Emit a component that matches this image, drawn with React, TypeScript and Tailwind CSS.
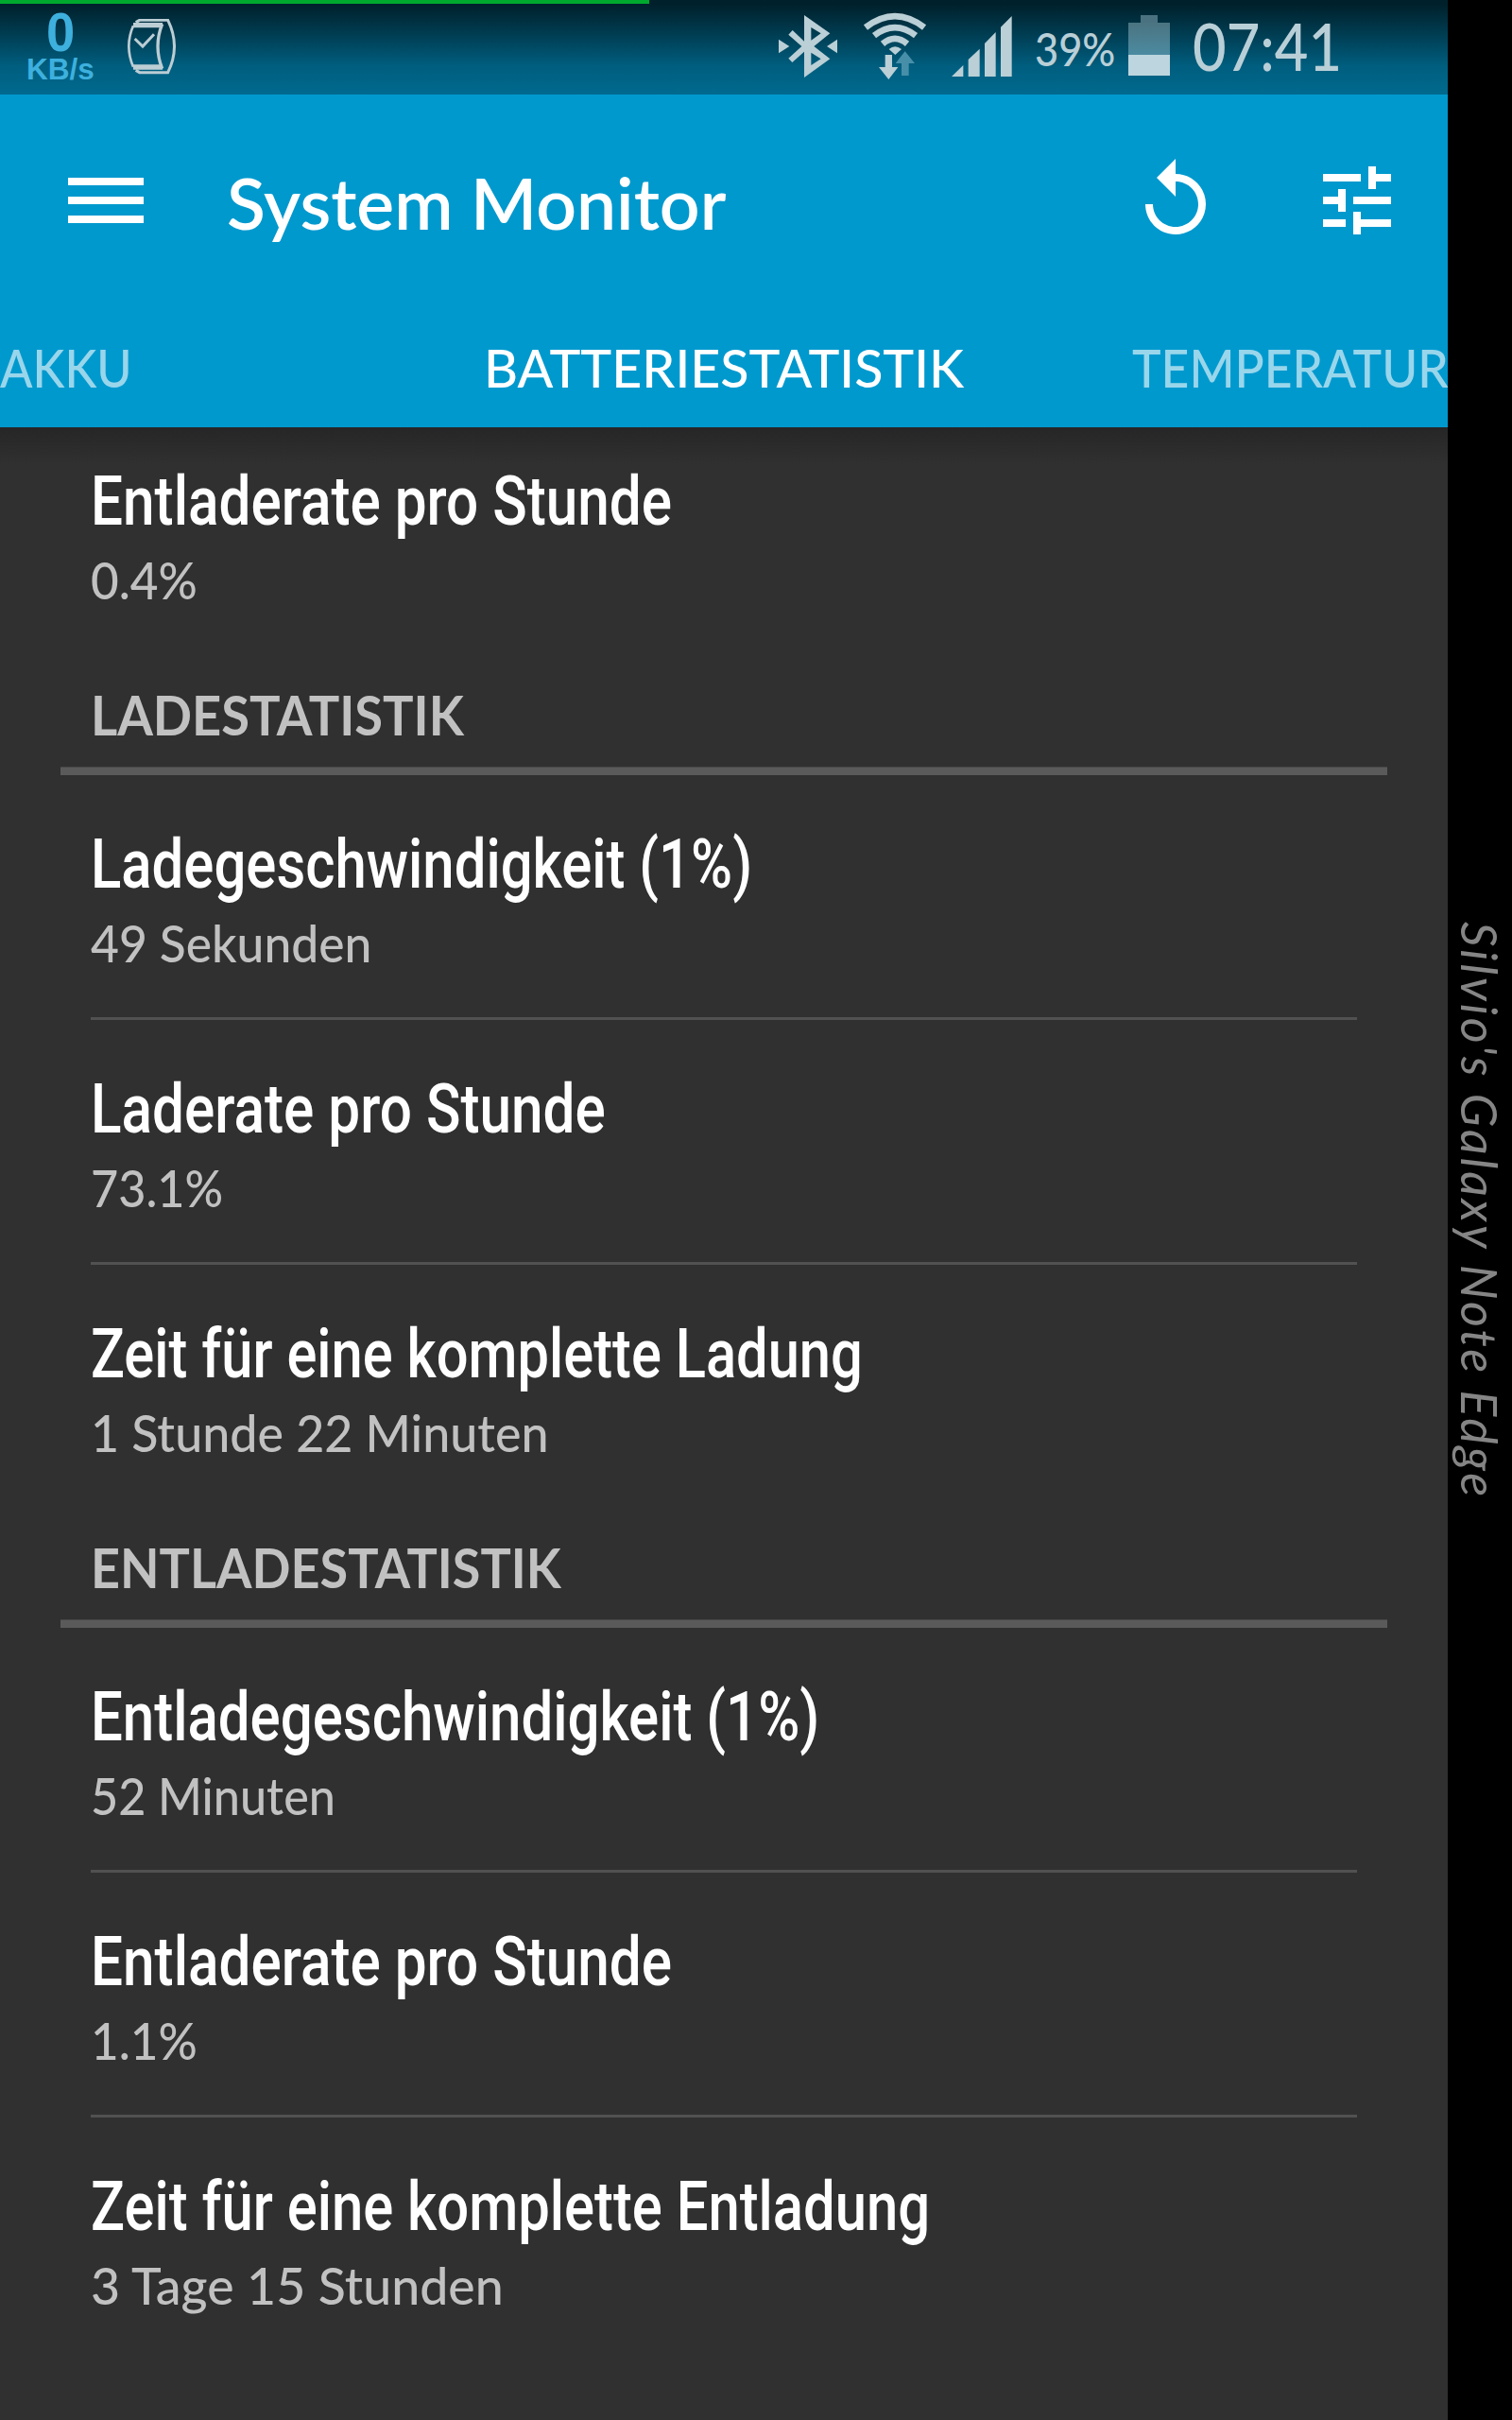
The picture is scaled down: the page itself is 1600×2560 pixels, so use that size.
import { useLayoutEffect, useRef, useState } from "react";

/* Condenses or stretches a single line of text to a fixed width. */
function Fit({ text, width, className = "" }: { text: string; width: number; className?: string }) {
  const ref = useRef<HTMLSpanElement>(null);
  const [scale, setScale] = useState(1);
  useLayoutEffect(() => {
    if (ref.current) setScale(width / ref.current.offsetWidth);
  }, [text, width]);
  return (
    <div className={`shrink-0 whitespace-nowrap ${className}`} style={{ width }}>
      <span ref={ref} className="inline-block origin-left" style={{ transform: `scaleX(${scale})` }}>
        {text}
      </span>
    </div>
  );
}

type Stat = { title: string; tw: number; value: string; vw: number };

const charging: Stat[] = [
  { title: "Ladegeschwindigkeit (1%)", tw: 700, value: "49 Sekunden", vw: 297 },
  { title: "Laderate pro Stunde", tw: 545, value: "73.1%", vw: 140 },
  { title: "Zeit für eine komplette Ladung", tw: 817, value: "1 Stunde 22 Minuten", vw: 485 },
];

const discharging: Stat[] = [
  { title: "Entladegeschwindigkeit (1%)", tw: 771, value: "52 Minuten", vw: 259 },
  { title: "Entladerate pro Stunde", tw: 615, value: "1.1%", vw: 113 },
  { title: "Zeit für eine komplette Entladung", tw: 888, value: "3 Tage 15 Stunden", vw: 437 },
];

function Item({ title, tw, value, vw }: Stat) {
  return (
    <div className="px-24">
      <Fit text={title} width={tw} className="h-20 font-['Roboto'] text-[72px] leading-20 font-medium text-white" />
      <Fit text={value} width={vw} className="mt-[11px] h-16 text-[54px] leading-16 font-medium text-[#c1c1c1]" />
    </div>
  );
}

function Section({ label, width, stats }: { label: string; width: number; stats: Stat[] }) {
  return (
    <section className="pt-[78px]">
      <Fit text={label} width={width} className="mx-24 h-16 text-[57px] leading-16 font-bold text-[#c1c1c1]" />
      <div className="mx-16 mt-[23px] mb-px h-[9px] border-t border-[#484848] bg-[#5a5a5a]" />
      {stats.map((s, i) => (
        <div key={s.title}>
          {i > 0 && <div className="mx-24 mt-[46px] mb-px h-[3px] bg-[#515151]" />}
          <div className="pt-[54px]">
            <Item {...s} />
          </div>
        </div>
      ))}
    </section>
  );
}

function StatusBar() {
  return (
    <div className="relative flex h-[100px] items-start overflow-hidden bg-linear-to-b from-[#00212c] from-5% via-[#005e7f] via-70% to-[#006a8f] text-[#b9cfd7]">
      <div className="absolute top-0 left-0 h-1 w-[687px] bg-[#00a82d]" />
      <div className="ml-7 flex w-[72px] flex-col items-center font-['Liberation_Sans'] font-bold text-[#3eb0de]">
        <Fit text="0" width={30} className="mt-1.5 h-[52px] text-[58px] leading-[56px]" />
        <Fit text="KB/s" width={72} className="h-8 text-[32px] leading-[30px]" />
      </div>
      <svg className="mt-5 ml-[35px] h-[59px] w-[51px]" viewBox="405 60 153 177" fill="none" stroke="#bccdd4">
        <path d="M423 82 Q395 147 423 212" strokeWidth="8" />
        <path d="M423 80H516M423 213H516" strokeWidth="16" />
        <path d="M515 76Q487 147 515 218" strokeWidth="10" />
        <path d="M431 71L443 64H533Q574 147 533 230H443L431 223" strokeWidth="9" />
        <path d="M428 123L453 147L489 109" strokeWidth="9" />
      </svg>
      <svg className="mt-4 ml-[638px] h-[66px] w-[62px]" viewBox="72 48 186 198" fill="#bacfd6">
        <path fillRule="evenodd" d="M153 48L235 106L184 147L235 187L153 246V164L115 198L103 185L145 147L103 110L116 96L153 131ZM175 87V128L206 106ZM175 167V207L206 187Z" />
        <path d="M72 125L106 147L72 169ZM258 125V169L225 147Z" />
      </svg>
      <svg className="mt-[13px] ml-7 h-[71px] w-[66px]" viewBox="342 39 198 213" fill="none" stroke="#bacfd6">
        <path d="M348 87Q441 16 534 87" strokeWidth="20" />
        <path d="M375 113Q441 62 507 113" strokeWidth="20" />
        <path d="M402 139Q441 106 480 139" strokeWidth="20" />
        <path d="M422 156Q441 140 462 156L442 174Z" fill="#bacfd6" stroke="none" />
        <path d="M410 174H432V213H451L421 252L390 213H410Z" fill="#bacfd6" stroke="none" />
        <path d="M462 240V201H443L473 163L504 201H485V240Z" fill="#478fa8" stroke="none" />
      </svg>
      <svg className="mt-[17px] ml-[27px] h-16 w-16" viewBox="622 51 192 192" fill="#bacfd6">
        <path d="M622 243L659 207V243ZM675 243V189L711 155V243ZM727 243V138L762 102V243ZM778 243V86L813 51V243Z" />
      </svg>
      <Fit text="39%" width={85} className="mt-[23px] ml-6 h-14 text-[49px] leading-14 font-medium" />
      <div className="mt-4 ml-[14px] flex w-11 flex-col items-center">
        <div className="h-2 w-[18px] bg-[#49717f]" />
        <div className="h-[34px] w-11 bg-linear-to-b from-[#4b7481] to-[#4b8ba1]" />
        <div className="h-[22px] w-11 bg-[#bdd5de]" />
      </div>
      <Fit text="07:41" width={158} className="mt-2 ml-6 h-20 text-[70px] leading-20 font-medium" />
    </div>
  );
}

export default function App() {
  return (
    <div className="flex h-[2560px] w-[1600px] overflow-hidden bg-black font-['Lato',sans-serif]">
      <main className="flex w-[1532px] flex-col overflow-hidden bg-[#303030]">
        <StatusBar />
        <header className="h-[352px] bg-[#0099ce] text-white">
          <div className="flex h-56 items-center">
            <div className="ml-[72px] flex w-20 flex-col gap-3">
              <div className="h-2 bg-white" />
              <div className="h-2 bg-white" />
              <div className="h-2 bg-white" />
            </div>
            <Fit text="System Monitor" width={528} className="ml-[88px] h-24 text-[75px] leading-[100px] font-semibold" />
            <svg className="ml-auto h-24 w-24" viewBox="0 0 24 24" fill="white">
              <path d="M12 5V1L7 6l5 5V7c3.31 0 6 2.69 6 6s-2.69 6-6 6-6-2.69-6-6H4c0 4.42 3.58 8 8 8s8-3.58 8-8-3.58-8-8-8z" />
            </svg>
            <svg className="mr-12 ml-24 h-24 w-24" viewBox="0 0 24 24" fill="white">
              <path d="M3 17v2h6v-2H3zM3 5v2h10V5H3zm10 16v-2h8v-2h-8v-2h-2v6h2zM7 9v2H3v2h4v2h2V9H7zm14 4v-2H11v2h10zm-6-4h2V7h4V5h-4V3h-2v6z" />
            </svg>
          </div>
          <nav className="flex h-32 items-center text-[55px] leading-[64px] font-medium">
            <Fit text="AKKU" width={140} className="mt-0.5 text-[#99d6eb]" />
            <Fit text="BATTERIESTATISTIK" width={508} className="mt-0.5 ml-[372px]" />
            <Fit text="TEMPERATUR" width={335} className="mt-0.5 ml-[178px] text-[#99d6eb]" />
          </nav>
        </header>
        <div className="h-[39px] bg-linear-to-b from-[#262626] to-[#303030]" />
        <Item title="Entladerate pro Stunde" tw={615} value="0.4%" vw={113} />
        <Section label="LADESTATISTIK" width={395} stats={charging} />
        <Section label="ENTLADESTATISTIK" width={498} stats={discharging} />
      </main>
      <aside className="flex w-[68px] items-start pt-[975px]">
        <div className="ml-0.5 h-[620px] w-16 [writing-mode:vertical-rl]">
          <span className="inline-block text-[52px] leading-[64px] tracking-[3px] whitespace-nowrap text-[#858585] italic">
            Silvio's Galaxy Note Edge
          </span>
        </div>
      </aside>
    </div>
  );
}
